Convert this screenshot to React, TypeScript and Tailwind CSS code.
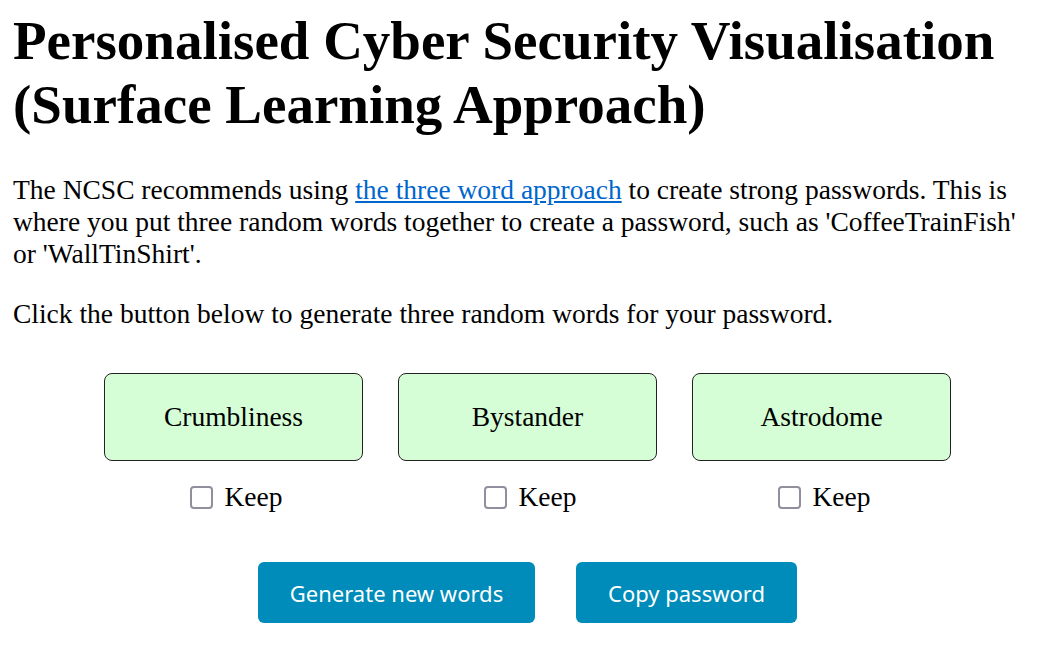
import React, { useState } from 'react';

const WordBox: React.FC<{ word: string; keep: boolean; onToggle: () => void }> = ({ word, keep, onToggle }) => (
  <div className="flex flex-col items-center">
    <div className="w-[259px] h-[88px] flex items-center justify-center bg-[#d6fed6] border border-[#222] rounded-lg">
      {word}
    </div>
    <label className="mt-[20px] ml-[6px] flex items-center gap-[11px] cursor-pointer" onClick={onToggle}>
      <span
        className={`w-[23px] h-[23px] border-2 border-[#8f8f9d] rounded-[4px] ${keep ? 'bg-[#0060df]' : 'bg-white'}`}
      />
      <span className="leading-[32px]">Keep</span>
    </label>
  </div>
);

export default function App() {
  const [words] = useState(['Crumbliness', 'Bystander', 'Astrodome']);
  const [keep, setKeep] = useState([false, false, false]);

  const toggle = (i: number) => setKeep(k => k.map((v, j) => (j === i ? !v : v)));

  return (
    <div className="min-h-[669px] bg-white text-black px-[13px] pt-[9px] text-[27.5px] leading-[32px] font-['Liberation_Serif',serif]">
      <h1 className="text-[55px] leading-[64px] font-bold">
        Personalised Cyber Security Visualisation (Surface Learning Approach)
      </h1>

      <p className="mt-[37px]">
        The NCSC recommends using{' '}
        <a href="#" className="text-[#0066cc] underline">the three word approach</a> to create strong
        passwords. This is where you put three random words together to create a password, such as
        'CoffeeTrainFish' or 'WallTinShirt'.
      </p>

      <p className="mt-[28px]">Click the button below to generate three random words for your password.</p>

      <div className="mt-[43px] flex justify-center gap-[35px] pl-[10px]">
        {words.map((w, i) => (
          <WordBox key={w} word={w} keep={keep[i]} onToggle={() => toggle(i)} />
        ))}
      </div>

      <div className="mt-[49px] flex justify-center gap-[41px] pl-[10px] font-['Noto_Sans',sans-serif] text-[22px] text-white">
        <button className="h-[61px] w-[277px] bg-[#008cba] rounded-[6px]">Generate new words</button>
        <button className="h-[61px] w-[221px] bg-[#008cba] rounded-[6px]">Copy password</button>
      </div>
    </div>
  );
}
